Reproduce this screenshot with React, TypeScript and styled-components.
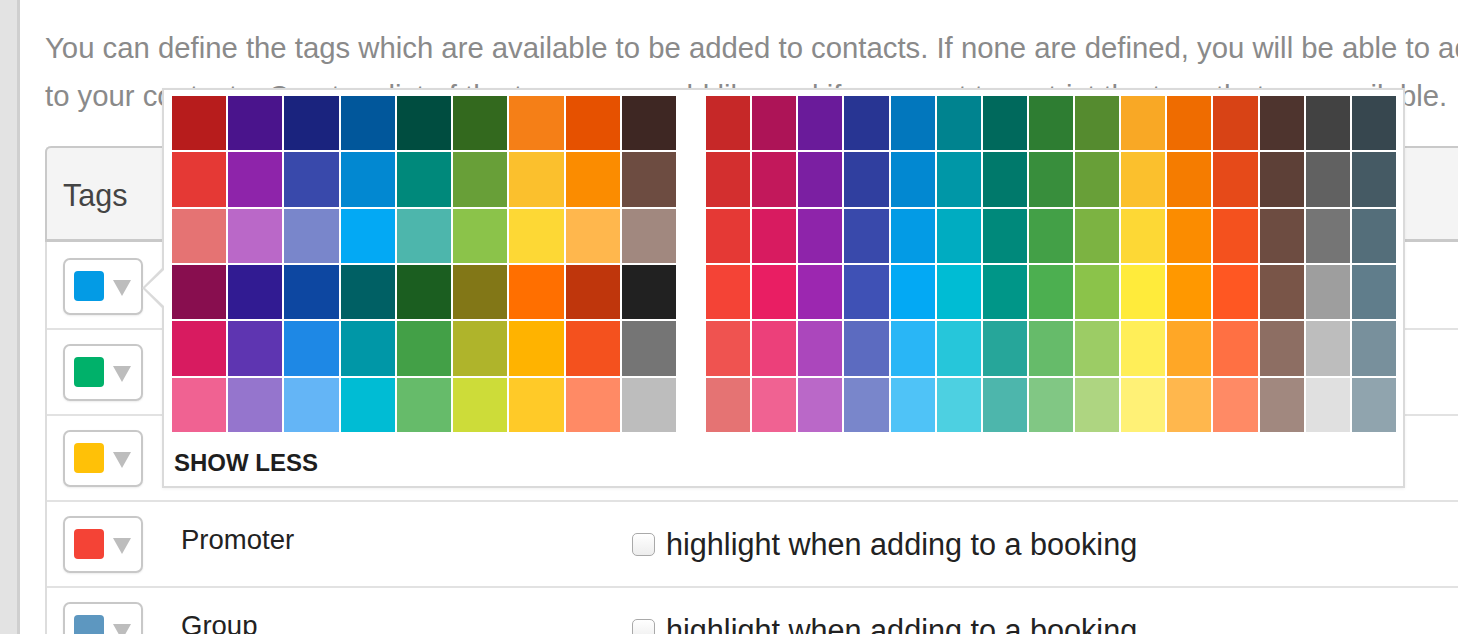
import React from "react";
import styled, { createGlobalStyle } from "styled-components";

const leftPalette = [
  ["#b71c1c", "#4a148c", "#1a237e", "#01579b", "#004d40", "#33691e", "#f57f17", "#e65100", "#3e2723"],
  ["#e53935", "#8e24aa", "#3949ab", "#0288d1", "#00897b", "#689f38", "#fbc02d", "#fb8c00", "#6d4c41"],
  ["#e57373", "#ba68c8", "#7986cb", "#03a9f4", "#4db6ac", "#8bc34a", "#fdd835", "#ffb74d", "#a1887f"],
  ["#880e4f", "#311b92", "#0d47a1", "#006064", "#1b5e20", "#827717", "#ff6f00", "#bf360c", "#212121"],
  ["#d81b60", "#5e35b1", "#1e88e5", "#0097a7", "#43a047", "#afb42b", "#ffb300", "#f4511e", "#757575"],
  ["#f06292", "#9575cd", "#64b5f6", "#00bcd4", "#66bb6a", "#cddc39", "#ffca28", "#ff8a65", "#bdbdbd"],
];

const rightPalette = [
  ["#c62828", "#ad1457", "#6a1b9a", "#283593", "#0277bd", "#00838f", "#00695c", "#2e7d32", "#558b2f", "#f9a825", "#ef6c00", "#d84315", "#4e342e", "#424242", "#37474f"],
  ["#d32f2f", "#c2185b", "#7b1fa2", "#303f9f", "#0288d1", "#0097a7", "#00796b", "#388e3c", "#689f38", "#fbc02d", "#f57c00", "#e64a19", "#5d4037", "#616161", "#455a64"],
  ["#e53935", "#d81b60", "#8e24aa", "#3949ab", "#039be5", "#00acc1", "#00897b", "#43a047", "#7cb342", "#fdd835", "#fb8c00", "#f4511e", "#6d4c41", "#757575", "#546e7a"],
  ["#f44336", "#e91e63", "#9c27b0", "#3f51b5", "#03a9f4", "#00bcd4", "#009688", "#4caf50", "#8bc34a", "#ffeb3b", "#ff9800", "#ff5722", "#795548", "#9e9e9e", "#607d8b"],
  ["#ef5350", "#ec407a", "#ab47bc", "#5c6bc0", "#29b6f6", "#26c6da", "#26a69a", "#66bb6a", "#9ccc65", "#ffee58", "#ffa726", "#ff7043", "#8d6e63", "#bdbdbd", "#78909c"],
  ["#e57373", "#f06292", "#ba68c8", "#7986cb", "#4fc3f7", "#4dd0e1", "#4db6ac", "#81c784", "#aed581", "#fff176", "#ffb74d", "#ff8a65", "#a1887f", "#e0e0e0", "#90a4ae"],
];

const tags = [
  { color: "#039be5", name: "Customer" },
  { color: "#00b16a", name: "Supplier" },
  { color: "#ffc107", name: "Artist" },
  { color: "#f44336", name: "Promoter" },
  { color: "#5d97c0", name: "Group" },
];

export default function App() {
  return (
    <>
      <GlobalStyle />
      <Page>
        <Sidebar />
        <Main>
          <Intro>
            <Line>
              You can define the tags which are available to be added to contacts. If none are defined, you will be able to add any tag
            </Line>
            <Line>
              to your contacts. Create a list of the tags you would like and if you want to restrict the tags that are available.
            </Line>
          </Intro>
          <Panel>
            <PanelHeader>Tags</PanelHeader>
            {tags.map((tag) => (
              <TagRow key={tag.name}>
                <ColorCell>
                  <ColorButton>
                    <Swatch $color={tag.color} />
                    <Caret />
                  </ColorButton>
                </ColorCell>
                <NameCell>{tag.name}</NameCell>
                <HighlightCell>
                  <Checkbox type="checkbox" />
                  highlight when adding to a booking
                </HighlightCell>
              </TagRow>
            ))}
          </Panel>
          <Popover>
            <Palettes>
              <SwatchGrid $cols={9} $width={504}>
                {leftPalette.flat().map((c, i) => (
                  <Chip key={i} $color={c} />
                ))}
              </SwatchGrid>
              <SwatchGrid $cols={15} $width={690}>
                {rightPalette.flat().map((c, i) => (
                  <Chip key={i} $color={c} />
                ))}
              </SwatchGrid>
            </Palettes>
            <ShowLess>SHOW LESS</ShowLess>
          </Popover>
        </Main>
      </Page>
    </>
  );
}

const GlobalStyle = createGlobalStyle`
  html, body {
    margin: 0;
    padding: 0;
    background: #fff;
    overflow: hidden;
    font-family: "Liberation Sans", Arial, sans-serif;
  }
`;

const Page = styled.div`
  display: flex;
  height: 634px;
  width: 1458px;
  overflow: hidden;
`;

const Sidebar = styled.div`
  flex: 0 0 17px;
  background: #e3e3e3;
  border-right: 3px solid #cfcfcf;
`;

const Main = styled.div`
  position: relative;
  flex: 0 0 auto;
  width: 1700px;
  padding-left: 25px;
`;

const Intro = styled.p`
  margin: 0;
  padding-top: 24px;
  font-size: 29.3px;
  line-height: 48px;
  color: #8a8a8a;
`;

const Line = styled.span`
  display: block;
  white-space: nowrap;
`;

const Panel = styled.div`
  margin-top: 26px;
  width: 1600px;
  border-left: 2px solid #dddddd;
  border-top-left-radius: 6px;
`;

const PanelHeader = styled.div`
  box-sizing: border-box;
  height: 96px;
  display: flex;
  align-items: center;
  padding-left: 16px;
  padding-top: 3px;
  background: #f4f4f4;
  border-top: 2px solid #c9c9c9;
  border-bottom: 3px solid #c9c9c9;
  border-left: 2px solid #c9c9c9;
  border-top-left-radius: 6px;
  margin-left: -2px;
  font-size: 30.5px;
  color: #444;
`;

const TagRow = styled.div`
  box-sizing: border-box;
  height: 86px;
  display: flex;
  align-items: center;
  padding-left: 16px;
  border-bottom: 2px solid #e2e2e2;

  ${PanelHeader} + & {
    height: 88px;
    padding-top: 2px;
  }
`;

const ColorCell = styled.div`
  flex: 0 0 118px;
`;

const ColorButton = styled.div`
  box-sizing: border-box;
  width: 80px;
  height: 57px;
  display: flex;
  align-items: center;
  gap: 9px;
  padding-left: 9px;
  border: 2px solid #c8c8c8;
  border-radius: 7px;
  background: #fff;
  box-shadow: 0 1px 2px rgba(0, 0, 0, 0.08);
`;

const Swatch = styled.span<{ $color: string }>`
  width: 30px;
  height: 30px;
  border-radius: 4px;
  background: ${(p) => p.$color};
`;

const Caret = styled.span`
  width: 0;
  height: 0;
  margin-top: 4px;
  border-left: 9.5px solid transparent;
  border-right: 9.5px solid transparent;
  border-top: 16px solid #bdbdbd;
`;

const NameCell = styled.div`
  flex: 0 0 451px;
  margin-bottom: 8px;
  font-size: 27.5px;
  color: #222;
`;

const HighlightCell = styled.label`
  display: flex;
  align-items: center;
  gap: 11px;
  font-size: 30.6px;
  color: #222;
  white-space: nowrap;
`;

const Checkbox = styled.input`
  appearance: none;
  margin: 0;
  width: 23px;
  height: 23px;
  border: 1px solid #a9a9a9;
  border-radius: 5px;
  background: linear-gradient(#ffffff, #ededed);
`;

const Popover = styled.div`
  position: absolute;
  left: 142px;
  top: 88px;
  padding: 6px 7px 0 8px;
  background: #fff;
  border: 2px solid #dadada;
  box-shadow: 0 1px 3px rgba(0, 0, 0, 0.06);

  &::before,
  &::after {
    content: "";
    position: absolute;
    width: 0;
    height: 0;
    border-style: solid;
    border-color: transparent;
  }

  &::before {
    left: -22px;
    top: 178px;
    border-width: 20px 20px 20px 0;
    border-right-color: #dadada;
  }

  &::after {
    left: -19px;
    top: 180px;
    border-width: 18px 19px 18px 0;
    border-right-color: #fff;
  }
`;

const Palettes = styled.div`
  display: flex;
  gap: 30px;
`;

const SwatchGrid = styled.div<{ $cols: number; $width: number }>`
  display: grid;
  grid-template-columns: repeat(${(p) => p.$cols}, 1fr);
  grid-template-rows: repeat(6, 1fr);
  gap: 2px;
  width: ${(p) => p.$width}px;
  height: 336px;
`;

const Chip = styled.div<{ $color: string }>`
  background: ${(p) => p.$color};
`;

const ShowLess = styled.div`
  padding: 17px 2px 9px;
  font-size: 24px;
  line-height: 28px;
  font-weight: bold;
  color: #1e1e1e;
`;
